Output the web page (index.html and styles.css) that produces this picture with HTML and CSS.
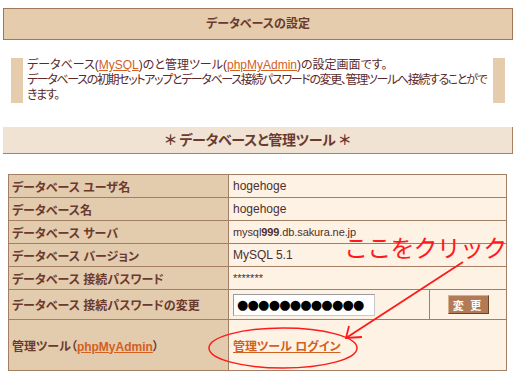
FILE: index.html
```html
<!DOCTYPE html>
<html lang="ja">
<head>
<meta charset="utf-8">
<title>データベースの設定</title>
<link rel="stylesheet" href="styles.css">
</head>
<body>
<div class="page">
    <h1 class="page-title">データベースの設定</h1>

    <div class="note">
        データベース(<a href="#">MySQL</a>)のと管理ツール(<a href="#">phpMyAdmin</a>)の設定画面です。<br>
        <span class="tight">データベースの初期セットアップとデータベース接続パスワードの変更、管理ツールへ接続することができます。</span>
    </div>

    <h2 class="section-title">＊ データベースと管理ツール ＊</h2>

    <table class="db-table">
        <tr>
            <th>データベース ユーザ名</th>
            <td colspan="2">hogehoge</td>
        </tr>
        <tr>
            <th>データベース名</th>
            <td colspan="2">hogehoge</td>
        </tr>
        <tr>
            <th>データベース サーバ</th>
            <td colspan="2" class="server">mysql<b>999</b>.db.sakura.ne.jp</td>
        </tr>
        <tr>
            <th>データベース バージョン</th>
            <td colspan="2">MySQL 5.1</td>
        </tr>
        <tr>
            <th>データベース 接続パスワード</th>
            <td colspan="2" class="stars">*******</td>
        </tr>
        <tr class="pass-row">
            <th>データベース 接続パスワードの変更</th>
            <td class="pass-cell"><div class="pass-input">●●●●●●●●●●●●</div></td>
            <td class="btn-cell"><button class="btn" type="button">変 更</button></td>
        </tr>
        <tr class="tool-row">
            <th>管理ツール（<a href="#">phpMyAdmin</a>）</th>
            <td colspan="2"><a class="login" href="#">管理ツール ログイン</a></td>
        </tr>
    </table>

    <div class="callout">ここをクリック</div>
    <svg class="marks" width="515" height="384" viewBox="0 0 515 384">
        <ellipse cx="283" cy="348" rx="74" ry="20" fill="none" stroke="#ff1a1a" stroke-width="1.5"/>
        <path d="M463 262 L346 338" fill="none" stroke="#ff1a1a" stroke-width="1.8"/>
        <path d="M349 326 L346 338 L362 337" fill="none" stroke="#ff1a1a" stroke-width="1.8"/>
    </svg>
</div>
</body>
</html>
```

FILE: styles.css
```css
html, body {
    margin: 0;
    background-color: #ffffff;
}

body {
    font-family: "Liberation Sans", "Noto Sans CJK JP", sans-serif;
    font-size: 12px;
    color: #5b2a2a;
}

.page {
    position: relative;
    width: 515px;
    height: 384px;
    padding: 8px 2px 0 3px;
    box-sizing: border-box;
    overflow: hidden;
}

a {
    color: #d2601e;
}

.page-title {
    margin: 0;
    height: 30px;
    line-height: 30px;
    text-align: center;
    font-size: 12px;
    font-weight: bold;
    color: #6b3a2e;
    background-color: #e4ccad;
    border: 1px solid #a07858;
    font-feature-settings: "palt";
}

.note {
    margin: 18px 8px 0 8px;
    padding-left: 4px;
    border-left: 12px solid #e4ccad;
    border-right: 12px solid #e4ccad;
    line-height: 15px;
    font-feature-settings: "palt";
}

.note .tight {
    letter-spacing: -1.35px;
}

.section-title {
    margin: 24px 0 0 0;
    height: 26px;
    line-height: 27px;
    text-align: center;
    font-size: 14px;
    font-weight: bold;
    color: #6b3a2e;
    background-color: #f0e3d3;
    border-right: 1px solid #a88060;
    border-bottom: 1px solid #a88060;
    font-feature-settings: "palt";
    letter-spacing: -0.3px;
}

.db-table {
    margin: 20px 0 0 5px;
    width: 499px;
    border-collapse: collapse;
    border: 1px solid #a47e62;
}

.db-table th,
.db-table td {
    height: 22px;
    padding: 0 4px;
    border: 1px solid #a47e62;
    text-align: left;
    font-feature-settings: "palt";
}

.db-table th {
    width: 212px;
    padding-left: 3px;
    font-weight: bold;
    color: #6b3a2e;
    background-color: #e3cbae;
}

.db-table td {
    color: #4a3030;
    background-color: #fdf2e4;
}

.server {
    font-size: 11px;
    line-height: 12px;
    letter-spacing: -0.1px;
}

.stars {
    font-size: 11px;
}

.pass-row th,
.pass-row td {
    height: 29px;
}

.pass-cell {
    width: 192px;
}

.pass-input {
    width: 142px;
    height: 22px;
    line-height: 20px;
    padding-left: 3px;
    box-sizing: border-box;
    border: 1px solid #c8c8c8;
    border-top-color: #9a9a9a;
    border-left-color: #9a9a9a;
    background-color: #ffffff;
    color: #000000;
    font-family: "DejaVu Sans", sans-serif;
    font-size: 13px;
    letter-spacing: -0.8px;
    overflow: hidden;
    white-space: nowrap;
}

.btn-cell {
    text-align: center !important;
}

.btn {
    width: 41px;
    height: 19px;
    padding: 0;
    border: 1px solid #6e4428;
    border-top-color: #d8b090;
    border-left-color: #d8b090;
    background-color: #b27a55;
    color: #ffffff;
    font-family: "Noto Sans CJK JP", sans-serif;
    font-size: 11px;
    font-weight: bold;
    letter-spacing: 2px;
    line-height: 16px;
}

.tool-row th,
.tool-row td {
    height: 50px;
}

.login {
    font-weight: bold;
}

.callout {
    position: absolute;
    left: 344px;
    top: 235px;
    font-family: "Noto Sans CJK JP", sans-serif;
    font-size: 24px;
    font-weight: 400;
    line-height: 24px;
    color: #ff1a1a;
    letter-spacing: -0.8px;
    white-space: nowrap;
}

.marks {
    position: absolute;
    left: 0;
    top: 0;
    pointer-events: none;
}
```
